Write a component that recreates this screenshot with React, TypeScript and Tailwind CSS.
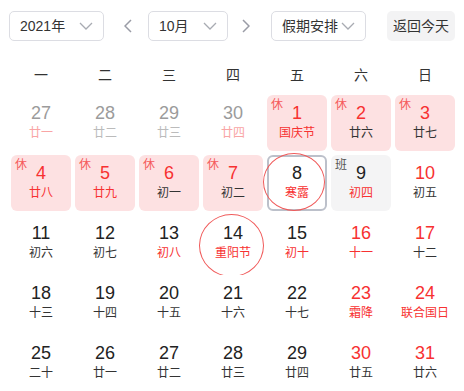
import React from "react";

type Tone = "dark" | "red" | "gray" | "pink" | "lightgray";

interface Day {
  n: number;
  lunar: string;
  num: Tone;
  sub: Tone;
  mark?: "休" | "班";
  selected?: boolean;
  circle?: "sm" | "lg";
}

const toneClass: Record<Tone, string> = {
  dark: "text-[#222]",
  red: "text-[#f73131]",
  gray: "text-[#9b9b9b]",
  pink: "text-[#f9a5a5]",
  lightgray: "text-[#bbbbbb]",
};

const subToneClass: Record<Tone, string> = {
  dark: "text-[#333]",
  red: "text-[#f73131]",
  gray: "text-[#9b9b9b]",
  pink: "text-[#f9a5a5]",
  lightgray: "text-[#bbbbbb]",
};

const days: Day[] = [
  { n: 27, lunar: "廿一", num: "gray", sub: "pink" },
  { n: 28, lunar: "廿二", num: "gray", sub: "lightgray" },
  { n: 29, lunar: "廿三", num: "gray", sub: "lightgray" },
  { n: 30, lunar: "廿四", num: "gray", sub: "pink" },
  { n: 1, lunar: "国庆节", num: "red", sub: "red", mark: "休" },
  { n: 2, lunar: "廿六", num: "red", sub: "dark", mark: "休" },
  { n: 3, lunar: "廿七", num: "red", sub: "dark", mark: "休" },

  { n: 4, lunar: "廿八", num: "red", sub: "red", mark: "休" },
  { n: 5, lunar: "廿九", num: "red", sub: "red", mark: "休" },
  { n: 6, lunar: "初一", num: "red", sub: "dark", mark: "休" },
  { n: 7, lunar: "初二", num: "red", sub: "dark", mark: "休" },
  { n: 8, lunar: "寒露", num: "dark", sub: "red", selected: true, circle: "sm" },
  { n: 9, lunar: "初四", num: "dark", sub: "red", mark: "班" },
  { n: 10, lunar: "初五", num: "red", sub: "dark" },

  { n: 11, lunar: "初六", num: "dark", sub: "dark" },
  { n: 12, lunar: "初七", num: "dark", sub: "dark" },
  { n: 13, lunar: "初八", num: "dark", sub: "red" },
  { n: 14, lunar: "重阳节", num: "dark", sub: "red", circle: "lg" },
  { n: 15, lunar: "初十", num: "dark", sub: "red" },
  { n: 16, lunar: "十一", num: "red", sub: "red" },
  { n: 17, lunar: "十二", num: "red", sub: "dark" },

  { n: 18, lunar: "十三", num: "dark", sub: "dark" },
  { n: 19, lunar: "十四", num: "dark", sub: "dark" },
  { n: 20, lunar: "十五", num: "dark", sub: "dark" },
  { n: 21, lunar: "十六", num: "dark", sub: "dark" },
  { n: 22, lunar: "十七", num: "dark", sub: "dark" },
  { n: 23, lunar: "霜降", num: "red", sub: "red" },
  { n: 24, lunar: "联合国日", num: "red", sub: "red" },

  { n: 25, lunar: "二十", num: "dark", sub: "dark" },
  { n: 26, lunar: "廿一", num: "dark", sub: "dark" },
  { n: 27, lunar: "廿二", num: "dark", sub: "dark" },
  { n: 28, lunar: "廿三", num: "dark", sub: "dark" },
  { n: 29, lunar: "廿四", num: "dark", sub: "dark" },
  { n: 30, lunar: "廿五", num: "red", sub: "dark" },
  { n: 31, lunar: "廿六", num: "red", sub: "dark" },
];

const weekdays = ["一", "二", "三", "四", "五", "六", "日"];

function ChevronDown() {
  return (
    <svg width="14" height="8" viewBox="0 0 14 8" fill="none">
      <path d="M1 1l6 6 6-6" stroke="#a8abb2" strokeWidth="1.3" />
    </svg>
  );
}

function Chevron({ dir }: { dir: "left" | "right" }) {
  return (
    <svg width="8" height="14" viewBox="0 0 8 14" fill="none">
      <path
        d={dir === "left" ? "M7 1L1 7l6 6" : "M1 1l6 6-6 6"}
        stroke="#9a9ca6"
        strokeWidth="1.5"
      />
    </svg>
  );
}

function Select({ label, width }: { label: string; width: string }) {
  return (
    <div
      className={`${width} h-[30px] flex items-center justify-between pl-[10px] pr-[10px] border border-[#dcdde3] rounded-[5px] bg-white`}
    >
      <span className="text-[14px] text-[#333]">{label}</span>
      <ChevronDown />
    </div>
  );
}

function DayCell({ d }: { d: Day }) {
  let box = "bg-white";
  if (d.mark === "休") box = "bg-[#fde1e2]";
  if (d.mark === "班") box = "bg-[#f4f4f5]";
  if (d.selected) box = "bg-white border-2 border-[#bcc0ca]";

  return (
    <div className={`relative h-[56px] rounded-[6px] ${box}`}>
      {d.mark && (
        <span
          className={`absolute left-[4px] top-[1px] text-[12px] leading-[18px] ${
            d.mark === "休" ? "text-[#f55a5a]" : "text-[#555]"
          }`}
        >
          {d.mark}
        </span>
      )}
      <div
        className={`flex flex-col items-center ${d.selected ? "pt-[5px]" : "pt-[7px]"}`}
      >
        <span className={`text-[18px] leading-[22px] ${toneClass[d.num]}`}>{d.n}</span>
        <span className={`text-[12px] leading-[18px] ${subToneClass[d.sub]}`}>
          {d.lunar}
        </span>
      </div>
      {d.circle === "sm" && (
        <div className="absolute left-[-6px] top-[-4px] w-[62px] h-[58px] rounded-[50%] border border-[#f05a5a] pointer-events-none" />
      )}
      {d.circle === "lg" && (
        <div className="absolute left-[-4px] top-[-1px] w-[65px] h-[63px] rounded-[50%] border border-[#f05a5a] pointer-events-none" />
      )}
    </div>
  );
}

export default function App() {
  return (
    <div
      className="w-[464px] h-[391px] bg-white overflow-hidden"
      style={{ fontFamily: '"Liberation Sans", Arial, "Noto Sans CJK SC", sans-serif' }}
    >
      <div className="flex items-center pt-[11px] pl-[9px]">
        <Select label="2021年" width="w-[95px]" />
        <div className="w-[44px] flex justify-center pl-[4px]">
          <Chevron dir="left" />
        </div>
        <Select label="10月" width="w-[80px]" />
        <div className="w-[43px] flex justify-center pr-[8px]">
          <Chevron dir="right" />
        </div>
        <Select label="假期安排" width="w-[95px]" />
        <div className="ml-[21px] w-[68px] h-[30px] rounded-[5px] bg-[#f3f3f4] flex items-center justify-center text-[14px] text-[#333]">
          返回今天
        </div>
      </div>

      <div className="grid grid-cols-[repeat(7,60px)] gap-x-[4px] pl-[11px] mt-[20px] h-[28px] items-center">
        {weekdays.map((w) => (
          <div key={w} className="text-center text-[14px] text-[#333]">
            {w}
          </div>
        ))}
      </div>

      <div className="grid grid-cols-[repeat(7,60px)] gap-x-[4px] gap-y-[4px] pl-[11px] mt-[6px]">
        {days.map((d, i) => (
          <DayCell key={i} d={d} />
        ))}
      </div>
    </div>
  );
}
